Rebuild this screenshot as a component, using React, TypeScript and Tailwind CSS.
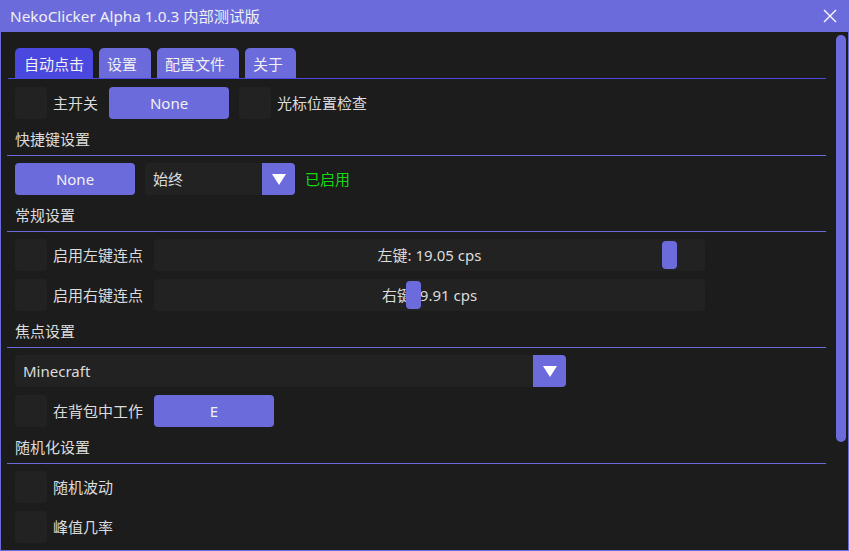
import React from 'react';

const FONT = { fontFamily: '"Noto Sans", "Noto Sans CJK SC", sans-serif' };

function Checkbox() {
  return <div className="w-[32px] h-[32px] rounded-[4px] bg-[#222222] shrink-0" />;
}

function Header({ label }: { label: string }) {
  return (
    <div>
      <div className="h-[36px] flex items-end pb-[6px] pl-[8px] text-[15px] leading-[20px] text-[#dcdcdc]">
        {label}
      </div>
      <div className="h-px bg-[#6b6bdc]" />
    </div>
  );
}

function PurpleButton({ label, width }: { label: string; width: string }) {
  return (
    <div
      className={`${width} h-[32px] rounded-[4px] bg-[#6b6bdc] flex items-center justify-center text-[15px] text-[#f2f2f2] shrink-0`}
    >
      {label}
    </div>
  );
}

function Dropdown({ value, width }: { value: string; width: string }) {
  return (
    <div className={`${width} h-[32px] flex shrink-0`}>
      <div className="flex-1 bg-[#222222] rounded-l-[4px] flex items-center pl-[8px] text-[15px] text-[#dcdcdc]">
        {value}
      </div>
      <div className="w-[33px] bg-[#6b6bdc] rounded-r-[4px] flex items-center justify-center">
        <svg width="14" height="11" viewBox="0 0 14 11">
          <polygon points="0,0 14,0 7,11" fill="#ffffff" />
        </svg>
      </div>
    </div>
  );
}

function Slider({ label, thumb }: { label: string; thumb: number }) {
  return (
    <div className="relative w-[551px] h-[32px] rounded-[4px] bg-[#222222] flex items-center justify-center text-[15px] text-[#dcdcdc] shrink-0">
      <span>{label}</span>
      <div
        className="absolute top-[2px] w-[15px] h-[28px] rounded-[4px] bg-[#6b6bdc]"
        style={{ left: thumb }}
      />
    </div>
  );
}

function Row({ children, className = '' }: { children: React.ReactNode; className?: string }) {
  return <div className={`h-[32px] flex items-center pl-[8px] ${className}`}>{children}</div>;
}

const tabs = [
  { label: '自动点击', w: 'w-[78px]', pl: 'pl-[9px]', active: true },
  { label: '设置', w: 'w-[52px]', pl: 'pl-[8px]', active: false },
  { label: '配置文件', w: 'w-[82px]', pl: 'pl-[8px]', active: false },
  { label: '关于', w: 'w-[51px]', pl: 'pl-[8px]', active: false },
];

export default function App() {
  return (
    <div className="w-[849px] h-[551px] flex flex-col bg-[#1c1c1c] overflow-hidden" style={FONT}>
      {/* Title bar */}
      <div className="h-[32px] bg-[#6b6bdc] flex items-center justify-between pl-[10px] pr-[12px] shrink-0">
        <span className="text-[15.3px] text-[#f0f0f0]">NekoClicker Alpha 1.0.3 内部测试版</span>
        <svg width="14" height="14" viewBox="0 0 14 14">
          <path d="M1 1 L13 13 M13 1 L1 13" stroke="#ffffff" strokeWidth="1.3" />
        </svg>
      </div>

      {/* Body */}
      <div className="flex-1 flex border-l border-r border-b border-[#6b6bdc] min-h-0">
        <div className="w-[825px] pl-[6px] overflow-hidden">
          {/* Tabs */}
          <div className="mt-[16px] flex gap-[6px] pl-[8px]">
            {tabs.map((t) => (
              <div
                key={t.label}
                className={`${t.w} ${t.pl} h-[30px] rounded-t-[5px] flex items-center pt-[3px] text-[15px] text-[#f0f0f0] ${
                  t.active ? 'bg-[#4b48e0]' : 'bg-[#6b6bdc]'
                }`}
              >
                {t.label}
              </div>
            ))}
          </div>
          <div className="h-px bg-[#4b48e0] ml-[1px]" />

          <Row className="mt-[8px]">
            <Checkbox />
            <span className="ml-[6px] text-[15px] text-[#dcdcdc]">主开关</span>
            <div className="ml-[11px]">
              <PurpleButton label="None" width="w-[120px]" />
            </div>
            <div className="ml-[10px]">
              <Checkbox />
            </div>
            <span className="ml-[6px] text-[15px] text-[#dcdcdc]">光标位置检查</span>
          </Row>

          <Header label="快捷键设置" />
          <Row className="mt-[7px]">
            <PurpleButton label="None" width="w-[120px]" />
            <div className="ml-[10px]">
              <Dropdown value="始终" width="w-[150px]" />
            </div>
            <span className="ml-[10px] text-[15px] text-[#14d814]">已启用</span>
          </Row>

          <Header label="常规设置" />
          <Row className="mt-[7px]">
            <Checkbox />
            <span className="ml-[6px] w-[101px] text-[15px] text-[#dcdcdc]">启用左键连点</span>
            <Slider label="左键: 19.05 cps" thumb={508} />
          </Row>
          <Row className="mt-[8px]">
            <Checkbox />
            <span className="ml-[6px] w-[101px] text-[15px] text-[#dcdcdc]">启用右键连点</span>
            <Slider label="右键: 9.91 cps" thumb={252} />
          </Row>

          <Header label="焦点设置" />
          <Row className="mt-[7px]">
            <Dropdown value="Minecraft" width="w-[551px]" />
          </Row>
          <Row className="mt-[8px]">
            <Checkbox />
            <span className="ml-[6px] w-[101px] text-[15px] text-[#dcdcdc]">在背包中工作</span>
            <PurpleButton label="E" width="w-[120px]" />
          </Row>

          <Header label="随机化设置" />
          <Row className="mt-[7px]">
            <Checkbox />
            <span className="ml-[6px] text-[15px] text-[#dcdcdc]">随机波动</span>
          </Row>
          <Row className="mt-[8px]">
            <Checkbox />
            <span className="ml-[6px] text-[15px] text-[#dcdcdc]">峰值几率</span>
          </Row>
        </div>

        {/* Scrollbar */}
        <div className="flex-1 pt-[3px] pl-[10px]">
          <div className="w-[10px] h-[407px] rounded-full bg-[#6b6bdc]" />
        </div>
      </div>
    </div>
  );
}
